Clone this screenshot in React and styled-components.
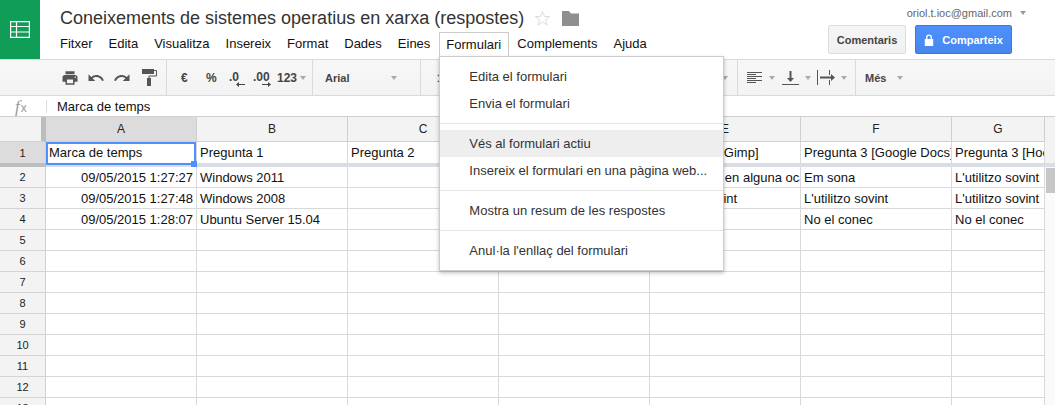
import React from 'react';
import styled, { createGlobalStyle } from 'styled-components';

const GlobalStyle = createGlobalStyle`
  html, body {
    margin: 0;
    height: 405px;
    overflow: hidden;
    background: #fff;
    font-family: 'Liberation Sans', Arial, sans-serif;
  }
`;

const Page = styled.div`
  width: 1055px;
  height: 405px;
  overflow: hidden;
  display: flex;
  flex-direction: column;
`;

const Header = styled.header`
  display: flex;
  height: 59px;
  flex: none;
  border-bottom: 1px solid #d9d9d9;
`;

const Logo = styled.div`
  width: 40px;
  background: #0f9d58;
  display: flex;
  align-items: center;
  justify-content: center;
`;

const TitleColumn = styled.div`
  display: flex;
  flex-direction: column;
  padding-left: 12px;
`;

const TitleRow = styled.div`
  height: 32px;
  display: flex;
  align-items: center;
  padding: 4px 0 0 8px;
  box-sizing: border-box;
`;

const DocTitle = styled.h1`
  margin: 0;
  font-size: 18px;
  font-weight: 400;
  color: #333;
`;

const TitleIcon = styled.svg`
  display: block;
  margin-left: ${p => p.$gap}px;
`;

const MenuBar = styled.nav`
  display: flex;
  height: 24px;
`;

const MenuName = styled.div`
  position: relative;
  height: 24px;
  line-height: 24px;
  padding: 0 8px;
  font-size: 13px;
  color: #111;
  box-sizing: border-box;
  ${p => p.$open && `
    z-index: 3;
    height: 25px;
    line-height: 23px;
    background: #fff;
    border: 1px solid #ccc;
    border-bottom: 0;
    margin-left: 1px;
    padding: 0 7px 0 6px;
  `}
`;

const Dropdown = styled.div`
  position: absolute;
  top: 23px;
  left: -1px;
  z-index: -1;
  width: 283px;
  padding: 6px 0;
  background: #fff;
  border: 1px solid #ccc;
  box-shadow: 0 2px 4px rgba(0, 0, 0, 0.25);
`;

const DropItem = styled.div`
  height: 27px;
  line-height: 27px;
  padding-left: 29px;
  font-size: 13px;
  color: #333;
  white-space: nowrap;
  background: ${p => (p.$active ? '#eee' : 'transparent')};
`;

const DropSeparator = styled.div`
  height: 1px;
  margin: 6px 0;
  background: #e5e5e5;
`;

const Account = styled.div`
  margin-left: auto;
  display: flex;
  flex-direction: column;
  align-items: flex-end;
  padding-right: 43px;
`;

const Email = styled.div`
  display: flex;
  align-items: center;
  height: 25px;
  margin-right: -14px;
  font-size: 11px;
  color: #666;
  gap: 8px;
`;

const Buttons = styled.div`
  display: flex;
  gap: 9px;
`;

const Button = styled.div`
  height: 29px;
  box-sizing: border-box;
  display: flex;
  align-items: center;
  justify-content: center;
  gap: 8px;
  border-radius: 2px;
  font-size: 11px;
  font-weight: 700;
  width: ${p => p.$w}px;
  color: ${p => (p.$primary ? '#fff' : '#444')};
  border: 1px solid ${p => (p.$primary ? '#3f78d8' : '#dcdcdc')};
  background: ${p =>
    p.$primary
      ? 'linear-gradient(#4d90fe, #4787ed)'
      : 'linear-gradient(#f5f5f5, #f1f1f1)'};
`;

const Toolbar = styled.div`
  display: flex;
  flex: none;
  height: 35px;
  border-bottom: 1px solid #d9d9d9;
  background: linear-gradient(#f7f7f7, #f3f3f3);
`;

const ToolGroup = styled.div`
  display: flex;
  align-items: center;
  box-sizing: border-box;
  width: ${p => p.$w}px;
  padding-left: ${p => p.$pad}px;
  gap: ${p => p.$gap || 0}px;
  border-right: ${p => (p.$last ? 0 : '1px solid #dadada')};
`;

const ToolText = styled.span`
  width: ${p => (p.$w ? `${p.$w}px` : 'auto')};
  flex: none;
  font-size: ${p => p.$size || 12}px;
  font-weight: 700;
  color: #444;
`;

const Decimal = styled.span`
  width: ${p => p.$w}px;
  flex: none;
  display: flex;
  flex-direction: column;
  font-size: 12px;
  line-height: 11px;
  font-weight: 700;
  color: #444;
  padding-top: 4px;
`;

const Spacer = styled.span`
  width: ${p => p.$w}px;
  flex: none;
`;

const Caret = styled.i`
  display: block;
  flex: none;
  width: 0;
  height: 0;
  margin-left: ${p => p.$left || 0}px;
  border: 3px solid transparent;
  border-top: 4px solid ${p => p.$color || '#aaa'};
  border-bottom: 0;
`;

const EndCaret = styled(Caret)`
  margin-left: auto;
  margin-right: 9px;
`;

const FormulaBar = styled.div`
  display: flex;
  align-items: center;
  flex: none;
  height: 20px;
  border-bottom: 1px solid #d0d0d0;
  font-size: 13px;
  color: #111;
`;

const FxLabel = styled.span`
  width: 47px;
  height: 13px;
  box-sizing: border-box;
  display: flex;
  align-items: flex-end;
  padding-left: 15px;
  color: #999;
  border-right: 1px solid #ddd;
  line-height: 13px;
`;

const FxF = styled.span`
  font: italic 17px/13px 'Liberation Serif', serif;
`;

const FxX = styled.span`
  font: 12px/10px 'Liberation Sans', sans-serif;
  margin-left: 1px;
`;

const FormulaText = styled.span`
  padding-left: 10px;
`;

const SheetBody = styled.div`
  display: flex;
  flex: 1;
  min-height: 0;
`;

const Rows = styled.div`
  width: 1045px;
  flex: none;
`;

const Row = styled.div`
  display: grid;
  grid-template-columns: 46px repeat(6, 151px) 93px;
  height: ${p => p.$h || 21}px;
`;

const RowHead = styled.div`
  box-sizing: border-box;
  display: flex;
  align-items: center;
  justify-content: center;
  font-size: 11px;
  color: #222;
  background: ${p => (p.$sel ? '#dcdcdc' : '#f3f3f3')};
  border-right: 1px solid #cfcfcf;
  border-bottom: 1px solid #d4d4d4;
`;

const Corner = styled.div`
  background: #f3f3f3;
  box-sizing: border-box;
  border-right: 5px solid #bdbdbd;
  border-bottom: 1px solid #d4d4d4;
`;

const ColHead = styled.div`
  box-sizing: border-box;
  display: flex;
  align-items: center;
  justify-content: center;
  font-size: 12px;
  color: #222;
  background: ${p => (p.$sel ? '#dcdcdc' : '#f3f3f3')};
  border-right: 1px solid #cfcfcf;
  border-bottom: 1px solid #d0d0d0;
`;

const Cell = styled.div`
  position: relative;
  box-sizing: border-box;
  min-width: 0;
  padding: 0 3px;
  font-size: 13px;
  line-height: 22px;
  color: #111;
  text-align: ${p => (p.$right ? 'right' : 'left')};
  white-space: nowrap;
  overflow: ${p => (p.$selected ? 'visible' : 'hidden')};
  border-right: 1px solid #d9d9d9;
  border-bottom: ${p => (p.$noLine ? 0 : '1px solid #d9d9d9')};
`;

const Selection = styled.div`
  position: absolute;
  inset: 0 0 -1px 0;
  border: 2px solid #4d90fe;
  z-index: 1;
`;

const Handle = styled.div`
  position: absolute;
  right: -3px;
  bottom: -4px;
  width: 6px;
  height: 6px;
  background: #4d90fe;
  z-index: 2;
`;

const FreezeHead = styled.div`
  background: #bdbdbd;
`;

const FreezeBand = styled.div`
  grid-column: 2 / -1;
  background: #d9dde6;
`;

const ScrollTrack = styled.div`
  flex: 1;
  background: #fafafa;
`;

const ScrollTop = styled.div`
  height: 46px;
  background: #f3f3f3;
`;

const ScrollBand = styled.div`
  height: 4px;
  background: #d9dde6;
`;

const ScrollThumb = styled.div`
  width: 9px;
  height: 25px;
  margin: 1px 0 0 1px;
  background: #c6c6c6;
`;

const columns = ['A', 'B', 'C', 'D', 'E', 'F', 'G'];

const firstRow = [
  'Marca de temps',
  'Pregunta 1',
  'Pregunta 2',
  'Pregunta 3 [Inkscape]',
  'Pregunta 3 [Gimp]',
  'Pregunta 3 [Google Docs]',
  'Pregunta 3 [Hootsuite]',
];

const dataRows = [
  ['09/05/2015 1:27:27', 'Windows 2011', '', '', "L'he utilitzat en alguna ocasió", 'Em sona', "L'utilitzo sovint"],
  ['09/05/2015 1:27:48', 'Windows 2008', '', '', "L'utilitzo sovint", "L'utilitzo sovint", "L'utilitzo sovint"],
  ['09/05/2015 1:28:07', 'Ubuntu Server 15.04', '', '', '', 'No el conec', 'No el conec'],
];

const emptyRows = [5, 6, 7, 8, 9, 10, 11, 12, 13];

function MiniArrow({ flip }) {
  return (
    <svg width="9" height="5" viewBox="0 0 9 5" style={{ alignSelf: 'flex-end', marginTop: -1 }}>
      <path d={flip ? 'M0 2h6V0l3 2.5L6 5V3H0z' : 'M9 2H3V0L0 2.5 3 5V3h6z'} fill="#444" />
    </svg>
  );
}

function Icon({ d, size = 18 }) {
  return (
    <svg width={size} height={size} viewBox="0 0 24 24" style={{ flex: 'none' }}>
      <path d={d} fill="#555" />
    </svg>
  );
}

function App() {
  return (
    <Page>
      <GlobalStyle />
      <Header>
        <Logo>
          <svg width="20" height="17" viewBox="0 0 20 17">
            <path
              d="M.6.6h18.8v15.8H.6zM.6 5.5h18.8M.6 11h18.8M6.5.6v15.8"
              fill="none"
              stroke="#fff"
              strokeWidth="1.2"
            />
          </svg>
        </Logo>
        <TitleColumn>
          <TitleRow>
            <DocTitle>Coneixements de sistemes operatius en xarxa (respostes)</DocTitle>
            <TitleIcon $gap={10} width="17" height="17" viewBox="0 0 17 17">
              <path
                d="M8.5 1.5l2 5h5.2l-4.2 3.3 1.6 5.4-4.6-3.2-4.6 3.2 1.6-5.4L1.3 6.5h5.2z"
                fill="none"
                stroke="#ddd"
              />
            </TitleIcon>
            <TitleIcon $gap={11} width="17" height="15" viewBox="0 0 17 15">
              <path d="M0 0h7l2 2.5h8V15H0z" fill="#8f8f8f" />
            </TitleIcon>
          </TitleRow>
          <MenuBar>
            <MenuName>Fitxer</MenuName>
            <MenuName>Edita</MenuName>
            <MenuName>Visualitza</MenuName>
            <MenuName>Insereix</MenuName>
            <MenuName>Format</MenuName>
            <MenuName>Dades</MenuName>
            <MenuName>Eines</MenuName>
            <MenuName $open>
              Formulari
              <Dropdown>
                <DropItem>Edita el formulari</DropItem>
                <DropItem>Envia el formulari</DropItem>
                <DropSeparator />
                <DropItem $active>Vés al formulari actiu</DropItem>
                <DropItem>Insereix el formulari en una pàgina web...</DropItem>
                <DropSeparator />
                <DropItem>Mostra un resum de les respostes</DropItem>
                <DropSeparator />
                <DropItem>Anul·la l'enllaç del formulari</DropItem>
              </Dropdown>
            </MenuName>
            <MenuName>Complements</MenuName>
            <MenuName>Ajuda</MenuName>
          </MenuBar>
        </TitleColumn>
        <Account>
          <Email>
            oriol.t.ioc@gmail.com
            <Caret $color="#999" />
          </Email>
          <Buttons>
            <Button $w={78}>Comentaris</Button>
            <Button $w={97} $primary>
              <svg width="10" height="12" viewBox="0 0 10 12">
                <path
                  d="M2 5V3.4a3 3 0 0 1 6 0V5h1.2v7H.8V5zm1.4 0h3.2V3.4a1.6 1.6 0 0 0-3.2 0z"
                  fill="#fff"
                />
              </svg>
              Comparteix
            </Button>
          </Buttons>
        </Account>
      </Header>

      <Toolbar>
        <ToolGroup $w={167} $pad={61} $gap={8}>
          <Icon d="M19 8H5c-1.66 0-3 1.34-3 3v6h4v4h12v-4h4v-6c0-1.66-1.34-3-3-3zm-3 11H8v-5h8v5zm3-7c-.55 0-1-.45-1-1s.45-1 1-1 1 .45 1 1-.45 1-1 1zm-1-9H6v4h12V3z" />
          <Icon d="M12.5 8c-2.65 0-5.05.99-6.9 2.6L2 7v9h9l-3.62-3.62c1.39-1.16 3.16-1.88 5.12-1.88 3.54 0 6.55 2.31 7.6 5.5l2.37-.78C21.08 11.03 17.15 8 12.5 8z" />
          <Icon d="M18.4 10.6C16.55 8.99 14.15 8 11.5 8c-4.65 0-8.58 3.03-9.96 7.22L3.9 16c1.05-3.19 4.05-5.5 7.6-5.5 1.95 0 3.73.72 5.12 1.88L13 16h9V7l-3.6 3.6z" />
          <svg width="17" height="17" viewBox="0 0 17 17" style={{ flex: 'none', marginLeft: 2 }}>
            <path d="M1 0h12v5H1zM6 9h4v8H6z" fill="#555" />
            <path d="M13 1.5h2.5V7H8v2" fill="none" stroke="#555" />
          </svg>
        </ToolGroup>
        <ToolGroup $w={146} $pad={14}>
          <ToolText $w={25}>€</ToolText>
          <ToolText $w={23}>%</ToolText>
          <Decimal $w={16}>
            .0
            <MiniArrow />
          </Decimal>
          <Spacer $w={8} />
          <Decimal $w={18}>
            .00
            <MiniArrow flip />
          </Decimal>
          <Spacer $w={6} />
          <ToolText>123</ToolText>
          <Caret $left={3} />
        </ToolGroup>
        <ToolGroup $w={108} $pad={12}>
          <ToolText $w={66} $size={11}>Arial</ToolText>
          <Caret />
        </ToolGroup>
        <ToolGroup $w={317} $pad={16}>
          <ToolText $size={11}>10</ToolText>
          <EndCaret />
        </ToolGroup>
        <ToolGroup $w={118} $pad={9}>
          <svg width="15" height="12" viewBox="0 0 15 12" style={{ flex: 'none' }}>
            <path d="M0 .5h15M0 2.5h9M0 4.5h15M0 6.5h9M0 8.5h15M0 10.5h9" stroke="#555" />
          </svg>
          <Caret $left={7} />
          <svg width="17" height="15" viewBox="0 0 17 15" style={{ flex: 'none', marginLeft: 7 }}>
            <path d="M7.5 1h2v7H12l-3.5 4L5 8h2.5zM0 14h17v1H0z" fill="#555" />
          </svg>
          <Caret $left={6} />
          <svg width="19" height="15" viewBox="0 0 19 15" style={{ flex: 'none', marginLeft: 6 }}>
            <path d="M.5 0v15" stroke="#555" />
            <path d="M12.5 0v5M12.5 10v5" stroke="#555" />
            <path d="M3 6.5h11V4l4 3.5-4 3.5V8.500H3z" fill="#555" />
          </svg>
          <Caret $left={5} />
        </ToolGroup>
        <ToolGroup $w={199} $pad={9} $last>
          <ToolText $w={32} $size={11}>Més</ToolText>
          <Caret />
        </ToolGroup>
      </Toolbar>

      <FormulaBar>
        <FxLabel>
          <FxF>f</FxF>
          <FxX>x</FxX>
        </FxLabel>
        <FormulaText>Marca de temps</FormulaText>
      </FormulaBar>

      <SheetBody>
        <Rows>
          <Row $h={25}>
            <Corner />
            {columns.map((col, i) => (
              <ColHead key={col} $sel={i === 0}>{col}</ColHead>
            ))}
          </Row>
          <Row>
            <RowHead $sel>1</RowHead>
            {firstRow.map((text, i) => (
              <Cell key={text} $noLine $selected={i === 0}>
                {text}
                {i === 0 && (
                  <Selection>
                    <Handle />
                  </Selection>
                )}
              </Cell>
            ))}
          </Row>
          <Row $h={4}>
            <FreezeHead />
            <FreezeBand />
          </Row>
          {dataRows.map((cells, r) => (
            <Row key={cells[0]}>
              <RowHead>{r + 2}</RowHead>
              {cells.map((text, i) => (
                <Cell key={i} $right={i === 0}>{text}</Cell>
              ))}
            </Row>
          ))}
          {emptyRows.map(n => (
            <Row key={n}>
              <RowHead>{n}</RowHead>
              {columns.map(col => (
                <Cell key={col} />
              ))}
            </Row>
          ))}
        </Rows>
        <ScrollTrack>
          <ScrollTop />
          <ScrollBand />
          <ScrollThumb />
        </ScrollTrack>
      </SheetBody>
    </Page>
  );
}

export default App;
